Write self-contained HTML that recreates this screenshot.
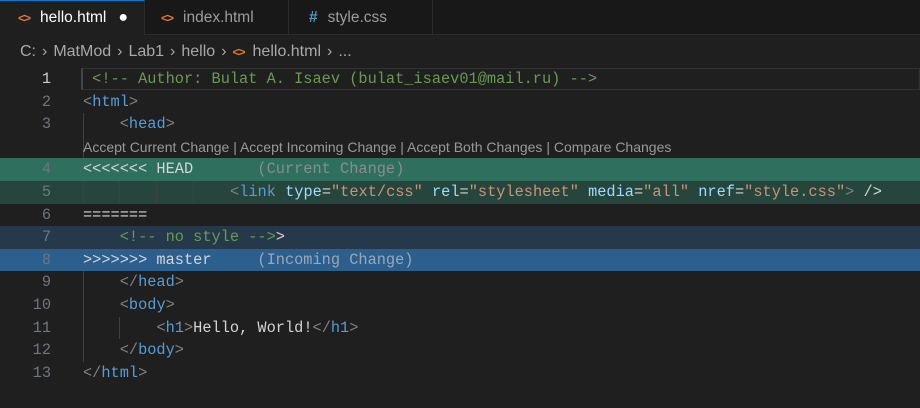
<!DOCTYPE html>
<html><head><style>
body{margin:0;width:920px;height:408px;background:#1f1f1f;overflow:hidden;font-family:"Liberation Sans",sans-serif;}
.tabs{height:35px;background:#181818;display:flex;border-bottom:1px solid #2b2b2b;box-sizing:border-box}
.tab{height:35px;box-sizing:border-box;border-right:1px solid #2b2b2b;display:flex;align-items:center;font-size:15.5px;color:#9d9d9d;}
.tab.active{background:#1f1f1f;color:#fff;border-top:1px solid #0078d4;}
.ic{color:#e37933;font-size:12px;font-weight:bold;margin-right:10px;letter-spacing:-1px}
.bc{height:33px;display:flex;align-items:center;padding-left:20px;font-size:16px;color:#a9a9a9;}
.bc .s{margin:0 6px;color:#a9a9a9}
.ed{position:relative;font-family:"Liberation Mono",monospace;font-size:15.3px;}
.ln{position:absolute;left:0;width:51px;text-align:right;color:#6e7681;}
.row{position:absolute;left:0;right:0;height:22.6px;line-height:22.6px;white-space:pre;}
.code{position:absolute;left:83px;}
.c{color:#6a9955}.t{color:#569cd6}.p{color:#808080}.a{color:#9cdcfe}.v{color:#ce9178}.w{color:#d4d4d4}.g{color:#8c8c8c}
.guide{position:absolute;top:0;bottom:0;width:1px;background:#404040}
</style></head><body>
<div class="tabs">
<div class="tab active" style="width:145px;padding-left:18px"><span class="ic">&lt;&gt;</span>hello.html<span style="margin-left:12px;font-size:16px">●</span></div>
<div class="tab" style="width:144px;padding-left:16px"><span class="ic">&lt;&gt;</span>index.html</div>
<div class="tab" style="width:144px;padding-left:20px"><span style="color:#519aba;font-weight:bold;margin-right:10px">#</span>style.css</div>
</div>
<div class="bc">C: <span class="s">›</span> MatMod <span class="s">›</span> Lab1 <span class="s">›</span> hello <span class="s">›</span> <span class="ic" style="margin-right:8px">&lt;&gt;</span>hello.html <span class="s">›</span> ...</div>
<div class="ed">
<div class="row" style="top:0"><span class="ln" style="color:#ccc">1</span><span class="code" style="border:1px solid #333;border-left:2px solid #454545;left:81px;right:0;height:20px;top:0;line-height:20px"><span class="c"> &lt;!-- Author: Bulat A. Isaev (bulat_isaev01@mail.ru) --&gt;</span></span></div>
<div class="row" style="top:22.6px"><span class="ln">2</span><span class="code"><span class="p">&lt;</span><span class="t">html</span><span class="p">&gt;</span></span></div>
<div class="row" style="top:45.2px"><span class="ln">3</span><span class="guide" style="left:83px"></span><span class="code">    <span class="p">&lt;</span><span class="t">head</span><span class="p">&gt;</span></span></div>
<div class="row" style="top:67.8px;font-family:'Liberation Sans',sans-serif;font-size:14px;color:#999"><span class="guide" style="left:83px"></span><span class="code">Accept Current Change | Accept Incoming Change | Accept Both Changes | Compare Changes</span></div>
<div class="row" style="top:90.4px;background:#2e705d"><span class="ln">4</span><span class="code" style="left:83px"><span class="w">&lt;&lt;&lt;&lt;&lt;&lt;&lt; HEAD</span><span class="g">       (Current Change)</span></span></div>
<div class="row" style="top:113px;background:#26453c"><span class="ln">5</span><span class="guide" style="left:83px"></span><span class="guide" style="left:119px"></span><span class="guide" style="left:156px"></span><span class="guide" style="left:193px"></span><span class="code" style="left:230px"><span class="p">&lt;</span><span class="t">link</span> <span class="a">type</span><span class="w">=</span><span class="v">"text/css"</span> <span class="a">rel</span><span class="w">=</span><span class="v">"stylesheet"</span> <span class="a">media</span><span class="w">=</span><span class="v">"all"</span> <span class="a">nref</span><span class="w">=</span><span class="v">"style.css"</span><span class="p">&gt;</span> <span class="w">/&gt;</span></span></div>
<div class="row" style="top:135.6px"><span class="ln">6</span><span class="code w">=======</span></div>
<div class="row" style="top:158.2px;background:#26394b"><span class="ln">7</span><span class="code">    <span class="c">&lt;!-- no style --&gt;</span><span class="w">&gt;</span></span></div>
<div class="row" style="top:180.8px;background:#2c5f8e"><span class="ln">8</span><span class="code"><span class="w">&gt;&gt;&gt;&gt;&gt;&gt;&gt; master</span><span class="g" style="color:#9aa8b5">     (Incoming Change)</span></span></div>
<div class="row" style="top:203.4px"><span class="ln">9</span><span class="guide" style="left:83px"></span><span class="code">    <span class="p">&lt;/</span><span class="t">head</span><span class="p">&gt;</span></span></div>
<div class="row" style="top:226px"><span class="ln">10</span><span class="guide" style="left:83px"></span><span class="code">    <span class="p">&lt;</span><span class="t">body</span><span class="p">&gt;</span></span></div>
<div class="row" style="top:248.6px"><span class="ln">11</span><span class="guide" style="left:83px"></span><span class="guide" style="left:119px"></span><span class="code">        <span class="p">&lt;</span><span class="t">h1</span><span class="p">&gt;</span><span class="w">Hello, World!</span><span class="p">&lt;/</span><span class="t">h1</span><span class="p">&gt;</span></span></div>
<div class="row" style="top:271.2px"><span class="ln">12</span><span class="guide" style="left:83px"></span><span class="code">    <span class="p">&lt;/</span><span class="t">body</span><span class="p">&gt;</span></span></div>
<div class="row" style="top:293.8px"><span class="ln">13</span><span class="code"><span class="p">&lt;/</span><span class="t">html</span><span class="p">&gt;</span></span></div>
</div>
</body></html>
